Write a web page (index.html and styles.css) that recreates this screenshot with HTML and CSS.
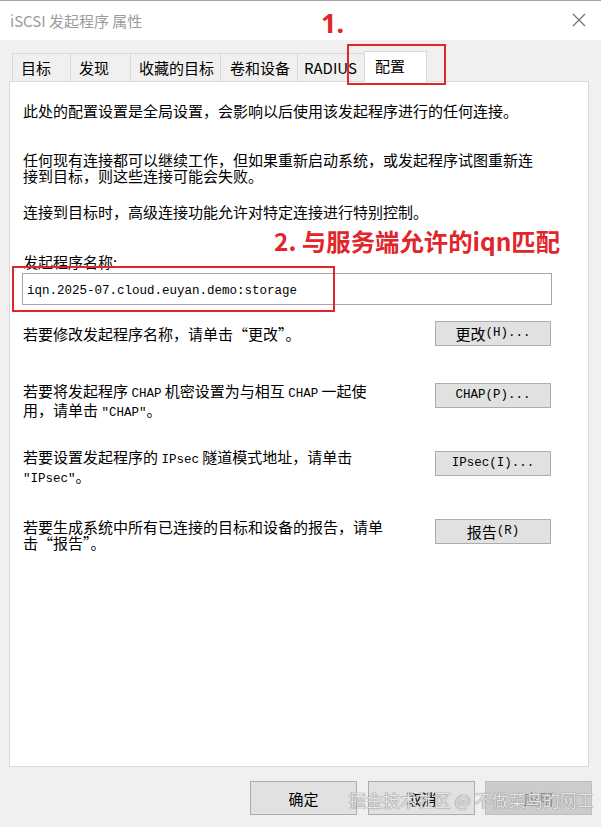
FILE: index.html
```html
<!DOCTYPE html>
<html lang="zh-CN">
<head>
<meta charset="utf-8">
<title>iSCSI 发起程序 属性</title>
<link rel="stylesheet" href="styles.css">
</head>
<body>
<div class="window">
  <header class="titlebar">
    <span class="title">iSCSI 发起程序 属性</span>
    <svg class="close" width="14" height="14" viewBox="0 0 14 14"><path d="M1 1L13 13M13 1L1 13" stroke="#6d6d6d" stroke-width="1.1" fill="none"/></svg>
  </header>

  <nav class="tabs">
    <div class="tab">目标</div>
    <div class="tab">发现</div>
    <div class="tab">收藏的目标</div>
    <div class="tab">卷和设备</div>
    <div class="tab">RADIUS</div>
    <div class="tab active">配置</div>
  </nav>

  <section class="panel">
    <p class="para p1">此处的配置设置是全局设置，会影响以后使用该发起程序进行的任何连接。</p>
    <p class="para p2">任何现有连接都可以继续工作，但如果重新启动系统，或发起程序试图重新连接到目标，则这些连接可能会失败。</p>
    <p class="para p3">连接到目标时，高级连接功能允许对特定连接进行特别控制。</p>
    <label class="label">发起程序名称:</label>
    <div class="input"><span class="mono">iqn.2025-07.cloud.euyan.demo:storage</span></div>

    <div class="row r1">
      <p class="desc">若要修改发起程序名称，请单击“更改”。</p>
      <button class="btn">更改<span class="mono">(H)...</span></button>
    </div>
    <div class="row r2">
      <p class="desc">若要将发起程序 <span class="mono">CHAP</span> 机密设置为与相互 <span class="mono">CHAP</span> 一起使用，请单击 <span class="mono">"CHAP"</span>。</p>
      <button class="btn"><span class="mono">CHAP(P)...</span></button>
    </div>
    <div class="row r3">
      <p class="desc">若要设置发起程序的 <span class="mono">IPsec</span> 隧道模式地址，请单击 <span class="mono">"IPsec"</span>。</p>
      <button class="btn low"><span class="mono">IPsec(I)...</span></button>
    </div>
    <div class="row r4">
      <p class="desc">若要生成系统中所有已连接的目标和设备的报告，请单击“报告”。</p>
      <button class="btn">报告<span class="mono">(R)</span></button>
    </div>
  </section>

  <footer class="footer">
    <button class="fbtn">确定</button>
    <button class="fbtn">取消</button>
    <button class="fbtn disabled">应用</button>
  </footer>
</div>

<div class="note n1">1.</div>
<div class="redbox b1"></div>
<div class="note n2">2. 与服务端允许的iqn匹配</div>
<div class="redbox b2"></div>
<div class="watermark">掘金技术社区 @ 不做菜鸟的网工</div>
</body>
</html>
```

FILE: styles.css
```css
html, body {
  margin: 0;
  padding: 0;
}
body {
  width: 601px;
  height: 827px;
  background: #f0f0f0;
  font-family: "Noto Sans CJK SC", "Noto Sans", sans-serif;
  color: #000;
  position: relative;
  overflow: hidden;
}
p { margin: 0; }

.window {
  display: flex;
  flex-direction: column;
}

.titlebar {
  height: 39px;
  border-top: 1px solid #a3a3a3;
  background: #fff;
  display: flex;
  align-items: center;
  justify-content: space-between;
  padding: 0 15px 0 10px;
}
.title {
  font-size: 15px;
  color: #9b9b9b;
  line-height: 1;
  margin-top: -1px;
}
.close { display: block; margin-top: -2px; }

.tabs {
  display: flex;
  align-items: flex-end;
  height: 28px;
  margin-top: 13px;
  padding-left: 12px;
  position: relative;
  z-index: 2;
}
.tab {
  box-sizing: border-box;
  height: 28px;
  padding: 0 0 0 8px;
  margin-right: -1px;
  border: 1px solid #d9d9d9;
  border-bottom: none;
  background: #f0f0f0;
  font-size: 15px;
  display: flex;
  align-items: center;
  line-height: 1;
  color: #000;
}
.tab:nth-child(1) { width: 59px; }
.tab:nth-child(2) { width: 61px; }
.tab:nth-child(3) { width: 91px; }
.tab:nth-child(4) { width: 78px; padding-left: 9px; }
.tab:nth-child(5) { width: 69px; padding-left: 6px; }
.tab.active {
  width: 63px;
  height: 31px;
  margin: 0 0 -1px -1px;
  padding: 0 0 3px 10px;
  background: #fff;
  position: relative;
  z-index: 3;
}

.panel {
  box-sizing: border-box;
  height: 686px;
  margin: 0 12px 0 9px;
  background: #fff;
  border: 1px solid #d9d9d9;
  padding: 21px 0 0 13px;
  position: relative;
  z-index: 1;
}
.para {
  font-size: 15px;
  line-height: 16px;
  width: 516px;
}
.p2 { margin-top: 33px; }
.p3 { margin-top: 20px; }
.label {
  display: block;
  font-size: 15px;
  line-height: 16px;
  margin-top: 34px;
}
.input {
  box-sizing: border-box;
  width: 530px;
  height: 32px;
  margin: 3px 0 0 -1px;
  border: 1px solid #a5a5a5;
  padding: 4px 0 0 4px;
  line-height: 18px;
}
.input .mono { font-size: 12.5px; }

.mono {
  font-family: "Liberation Mono", "DejaVu Sans Mono", monospace;
  font-size: 12.5px;
}

.row {
  display: flex;
  align-items: flex-start;
  width: 528px;
}
.row.r1 { margin-top: 16px; align-items: center; }
.row.r2 { margin-top: 37px; }
.row.r3 { margin-top: 28px; }
.row.r4 { margin-top: 32px; }
.desc {
  width: 365px;
  font-size: 15px;
  line-height: 16px;
}
.btn {
  margin-left: auto;
  box-sizing: border-box;
  width: 116px;
  height: 25px;
  background: #e1e1e1;
  border: 1px solid #adadad;
  font-family: "Noto Sans CJK SC", sans-serif;
  font-size: 15px;
  line-height: 1;
  padding: 0;
  color: #000;
  display: flex;
  align-items: center;
  justify-content: center;
}
.btn.low { margin-top: 2px; }

.footer {
  display: flex;
  justify-content: flex-end;
  gap: 10px;
  padding-right: 9px;
  margin-top: 14px;
}
.fbtn {
  box-sizing: border-box;
  width: 107px;
  height: 34px;
  background: #e1e1e1;
  border: 1px solid #adadad;
  font-family: "Noto Sans CJK SC", sans-serif;
  font-size: 15px;
  color: #000;
  padding: 0;
}
.fbtn:first-child { margin-right: 1px; }
.fbtn.disabled {
  background: #cccccc;
  border-color: #bfbfbf;
  color: #8a8a8a;
}

.note {
  position: absolute;
  color: #e0262b;
  font-weight: 700;
  line-height: 1;
  white-space: nowrap;
  z-index: 10;
}
.n1 { left: 321px; top: 9px; font-size: 27px; font-family: "Noto Sans", sans-serif; }
.n2 { left: 274px; top: 229px; font-size: 24.4px; font-family: "Noto Sans CJK SC", sans-serif; }
.redbox {
  position: absolute;
  border: 2px solid #e0262b;
  box-sizing: border-box;
  z-index: 10;
}
.b1 { left: 347px; top: 44px; width: 99px; height: 41px; }
.b2 { left: 12px; top: 266px; width: 323px; height: 46px; }

.watermark {
  position: absolute;
  left: 349px;
  top: 788px;
  font-size: 17px;
  line-height: 24px;
  color: rgba(240, 240, 240, 0.92);
  text-shadow: 0 0 1px #808080, 0 0 1px #808080;
  white-space: nowrap;
  z-index: 11;
}
```
